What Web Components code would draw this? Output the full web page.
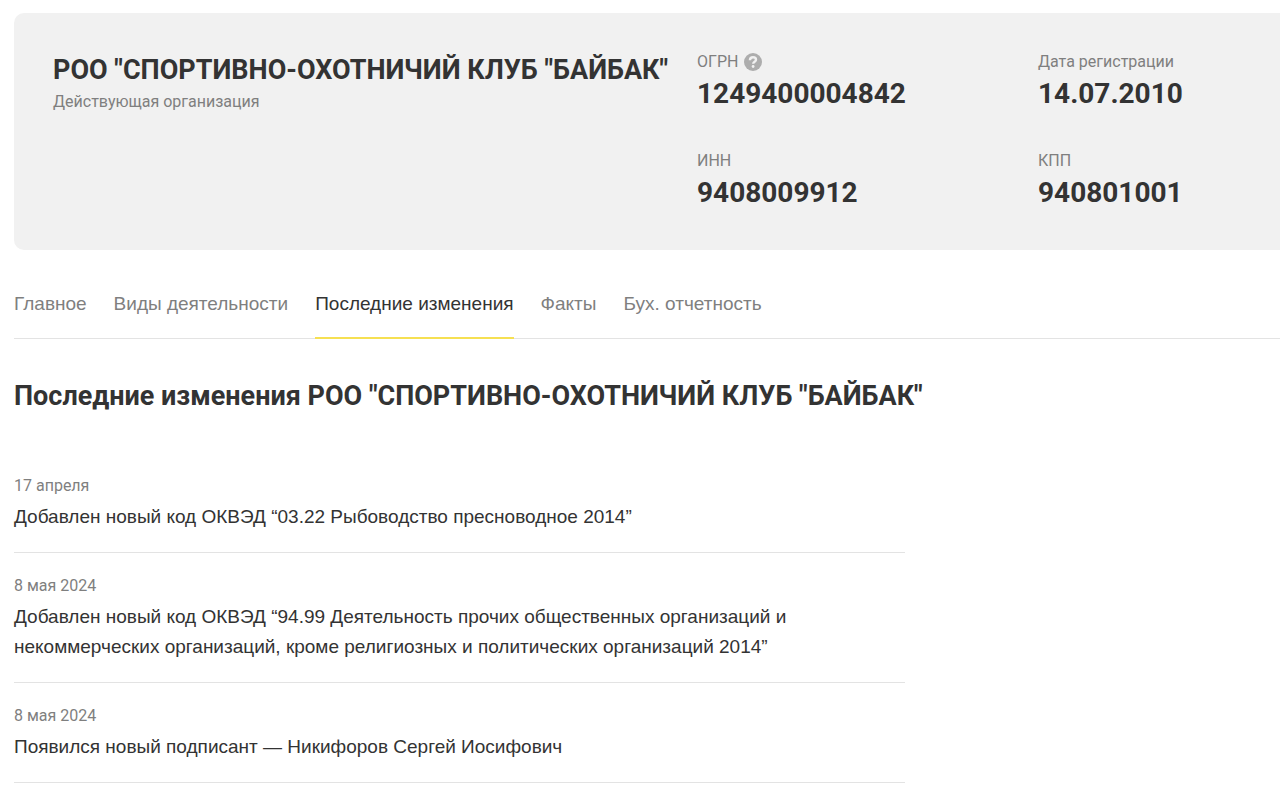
<!DOCTYPE html>
<html lang="ru">
<head>
<meta charset="utf-8">
<meta name="viewport" content="width=device-width, initial-scale=1">
<title>РОО "СПОРТИВНО-ОХОТНИЧИЙ КЛУБ "БАЙБАК"</title>
<style>
  body {
    margin: 0;
    background: #fff;
    color: #333;
    font-family: "Liberation Sans", Arial, sans-serif;
    overflow-x: hidden;
    --muted: #7f7f7f;
    --line: #e3e3e3;
    --accent: #f6e052;
    --display: Roboto, "Liberation Sans", sans-serif;
  }
</style>
</head>
<body>
<company-page></company-page>

<template id="page-tpl">
  <style>
    :host { display: block; padding: 13px 0 0 14px; }
    change-list { margin-top: 39px; }
    h2 { margin: 39px 0 0; font: 700 27px/36px var(--display); }
  </style>
  <company-card>
    <span slot="name">РОО "СПОРТИВНО-ОХОТНИЧИЙ КЛУБ "БАЙБАК"</span>
    <span slot="status">Действующая организация</span>
    <company-fact label="ОГРН" hint="Основной государственный регистрационный номер">1249400004842</company-fact>
    <company-fact label="Дата регистрации">14.07.2010</company-fact>
    <company-fact label="ИНН">9408009912</company-fact>
    <company-fact label="КПП">940801001</company-fact>
  </company-card>
  <section-tabs>
    <section-tab href="#main">Главное</section-tab>
    <section-tab href="#activities">Виды деятельности</section-tab>
    <section-tab href="#changes" current>Последние изменения</section-tab>
    <section-tab href="#facts">Факты</section-tab>
    <section-tab href="#reports">Бух. отчетность</section-tab>
  </section-tabs>
  <main>
    <h2>Последние изменения РОО "СПОРТИВНО-ОХОТНИЧИЙ КЛУБ "БАЙБАК"</h2>
    <change-list>
      <change-item date="17 апреля">Добавлен новый код ОКВЭД “03.22 Рыбоводство пресноводное 2014”</change-item>
      <change-item date="8 мая 2024">Добавлен новый код ОКВЭД “94.99 Деятельность прочих общественных организаций и некоммерческих организаций, кроме религиозных и политических организаций 2014”</change-item>
      <change-item date="8 мая 2024">Появился новый подписант — Никифоров Сергей Иосифович</change-item>
    </change-list>
  </main>
</template>

<template id="card-tpl">
  <style>
    :host {
      display: grid;
      grid-template-columns: minmax(max-content, 644px) minmax(0, 1fr);
      padding: 37px 0 37px 39px;
      border-radius: 10px 0 0 10px;
      background: #f1f1f1;
    }
    h1 { margin: 0; font: 700 27px/40px var(--display); }
    p { margin: 0; font: 16px/24px var(--display); color: var(--muted); }
    .facts { display: grid; grid-template-columns: 341px minmax(0, 1fr); row-gap: 35px; }
  </style>
  <header>
    <h1><slot name="name"></slot></h1>
    <p><slot name="status"></slot></p>
  </header>
  <div class="facts"><slot></slot></div>
</template>

<template id="fact-tpl">
  <style>
    :host { display: block; }
    .label { display: flex; align-items: center; gap: 6px; font: 16px/24px var(--display); color: var(--muted); }
    .value { font: 700 28px/40px var(--display); }
    button { display: flex; padding: 0; border: 0; background: none; cursor: pointer; }
    button[hidden] { display: none; }
  </style>
  <div class="label"><span></span>
    <button type="button" hidden>
      <svg width="18" height="18" viewBox="0 0 18 18" aria-hidden="true">
        <circle cx="9" cy="9" r="9" fill="#adadad"/>
        <path d="M5.9 7.2C6 5.3 7.2 4.3 9 4.3s3 1 3 2.5c0 2-2.8 2-2.8 4" fill="none" stroke="#f1f1f1" stroke-width="2.4"/>
        <circle cx="9.1" cy="13.5" r="1.4" fill="#f1f1f1"/>
      </svg>
    </button>
  </div>
  <div class="value"><slot></slot></div>
</template>

<template id="tabs-tpl">
  <style>
    :host { display: block; margin-top: 40px; border-bottom: 1px solid var(--line); }
    nav { display: flex; gap: 27px; margin-bottom: -1px; }
  </style>
  <nav><slot></slot></nav>
</template>

<template id="tab-tpl">
  <style>
    :host { display: block; }
    a {
      display: block;
      padding-bottom: 19px;
      border-bottom: 2px solid transparent;
      color: var(--muted);
      font-size: 19px;
      line-height: 28px;
      text-decoration: none;
      white-space: nowrap;
    }
    :host([current]) a { color: #333; border-color: var(--accent); }
  </style>
  <a><slot></slot></a>
</template>

<template id="list-tpl">
  <style>:host { display: block; max-width: 891px; }</style>
  <slot></slot>
</template>

<template id="item-tpl">
  <style>
    :host { display: block; padding: 21px 0 20px; border-bottom: 1px solid var(--line); }
    .date { font: 16px/24px var(--display); color: var(--muted); }
    p { margin: 4px 0 0; max-width: 800px; font-size: 19px; line-height: 30px; }
  </style>
  <div class="date"></div>
  <p><slot></slot></p>
</template>

<script>
  class TemplateElement extends HTMLElement {
    constructor() {
      super();
      const tpl = document.getElementById(this.constructor.template);
      this.attachShadow({ mode: 'open' }).append(document.importNode(tpl.content, true));
    }
    part$(selector) { return this.shadowRoot.querySelector(selector); }
  }

  class CompanyFact extends TemplateElement {
    static template = 'fact-tpl';
    connectedCallback() {
      this.part$('.label span').textContent = this.getAttribute('label');
      const button = this.part$('button');
      button.hidden = !this.hasAttribute('hint');
      if (!button.hidden) button.setAttribute('aria-label', this.getAttribute('hint'));
    }
  }

  class SectionTab extends TemplateElement {
    static template = 'tab-tpl';
    connectedCallback() {
      const link = this.part$('a');
      link.href = this.getAttribute('href');
      if (this.hasAttribute('current')) link.setAttribute('aria-current', 'page');
    }
  }

  class ChangeItem extends TemplateElement {
    static template = 'item-tpl';
    connectedCallback() { this.part$('.date').textContent = this.getAttribute('date'); }
  }

  customElements.define('company-fact', CompanyFact);
  customElements.define('section-tab', SectionTab);
  customElements.define('change-item', ChangeItem);
  customElements.define('company-card', class extends TemplateElement { static template = 'card-tpl'; });
  customElements.define('section-tabs', class extends TemplateElement { static template = 'tabs-tpl'; });
  customElements.define('change-list', class extends TemplateElement { static template = 'list-tpl'; });
  customElements.define('company-page', class extends TemplateElement { static template = 'page-tpl'; });
</script>
</body>
</html>
